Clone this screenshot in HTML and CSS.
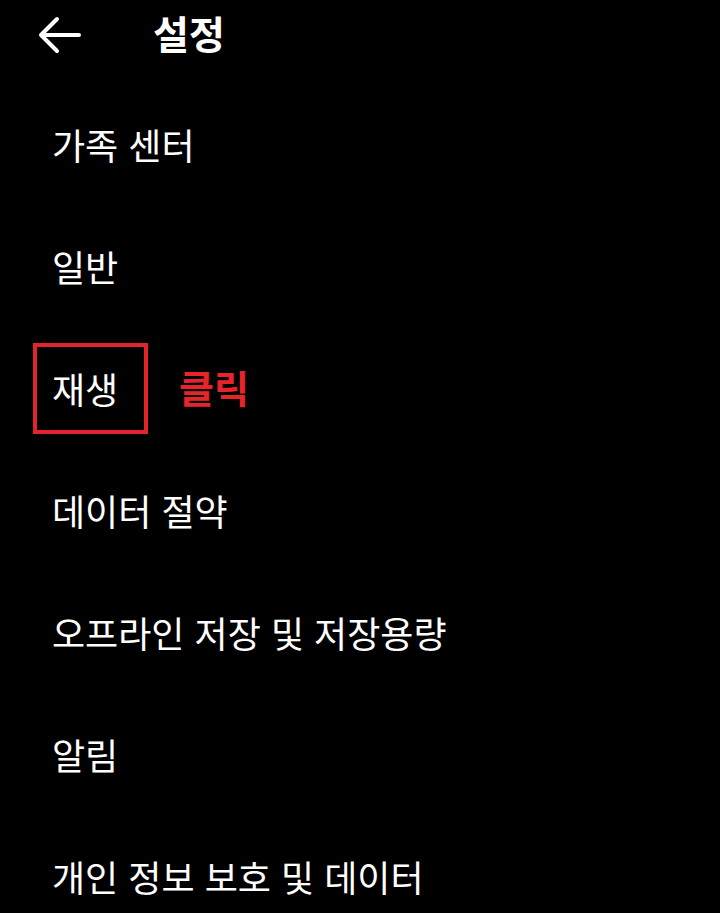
FILE: index.html
```html
<!DOCTYPE html>
<html lang="ko">
<head>
<meta charset="utf-8">
<title>설정</title>
<link rel="stylesheet" href="styles.css">
</head>
<body>
<div class="screen">
  <header class="topbar">
    <svg class="back" width="44" height="40" viewBox="0 0 44 40" aria-hidden="true">
      <path d="M41 20 H3 M19 4 L3 20 L19 36" fill="none" stroke="#fff" stroke-width="4" stroke-linecap="round" stroke-linejoin="round"/>
    </svg>
    <h1 class="title">설정</h1>
  </header>
  <ul class="menu">
    <li class="item">가족 센터</li>
    <li class="item">일반</li>
    <li class="item"><span class="highlight">재생</span><span class="note">클릭</span></li>
    <li class="item">데이터 절약</li>
    <li class="item">오프라인 저장 및 저장용량</li>
    <li class="item">알림</li>
    <li class="item">개인 정보 보호 및 데이터</li>
  </ul>
</div>
</body>
</html>
```
FILE: styles.css
```css
html, body {
  margin: 0;
  padding: 0;
  background: #000;
}
body {
  font-family: "Noto Sans CJK KR", "Noto Sans", sans-serif;
  color: #fff;
  width: 720px;
  height: 913px;
  overflow: hidden;
}
.screen {
  display: flex;
  flex-direction: column;
}
.topbar {
  height: 70px;
  display: flex;
  align-items: center;
  padding-left: 38px;
}
.back {
  display: block;
  flex: none;
}
.title {
  margin: -5px 0 0 71px;
  font-size: 39px;
  font-weight: 700;
  line-height: 1;
}
.menu {
  list-style: none;
  margin: 0;
  padding: 13px 0 0 0;
}
.item {
  height: 122px;
  display: flex;
  align-items: center;
  padding-left: 52px;
  font-size: 36px;
  line-height: 1;
  font-weight: 400;
}
.highlight {
  box-sizing: border-box;
  width: 115px;
  height: 91px;
  margin-left: -19px;
  padding-left: 15px;
  border: 4px solid #e3242b;
  display: flex;
  align-items: center;
}
.note {
  margin-left: 31px;
  margin-top: -2px;
  color: #e8242b;
  font-weight: 700;
  font-size: 38px;
}
```
